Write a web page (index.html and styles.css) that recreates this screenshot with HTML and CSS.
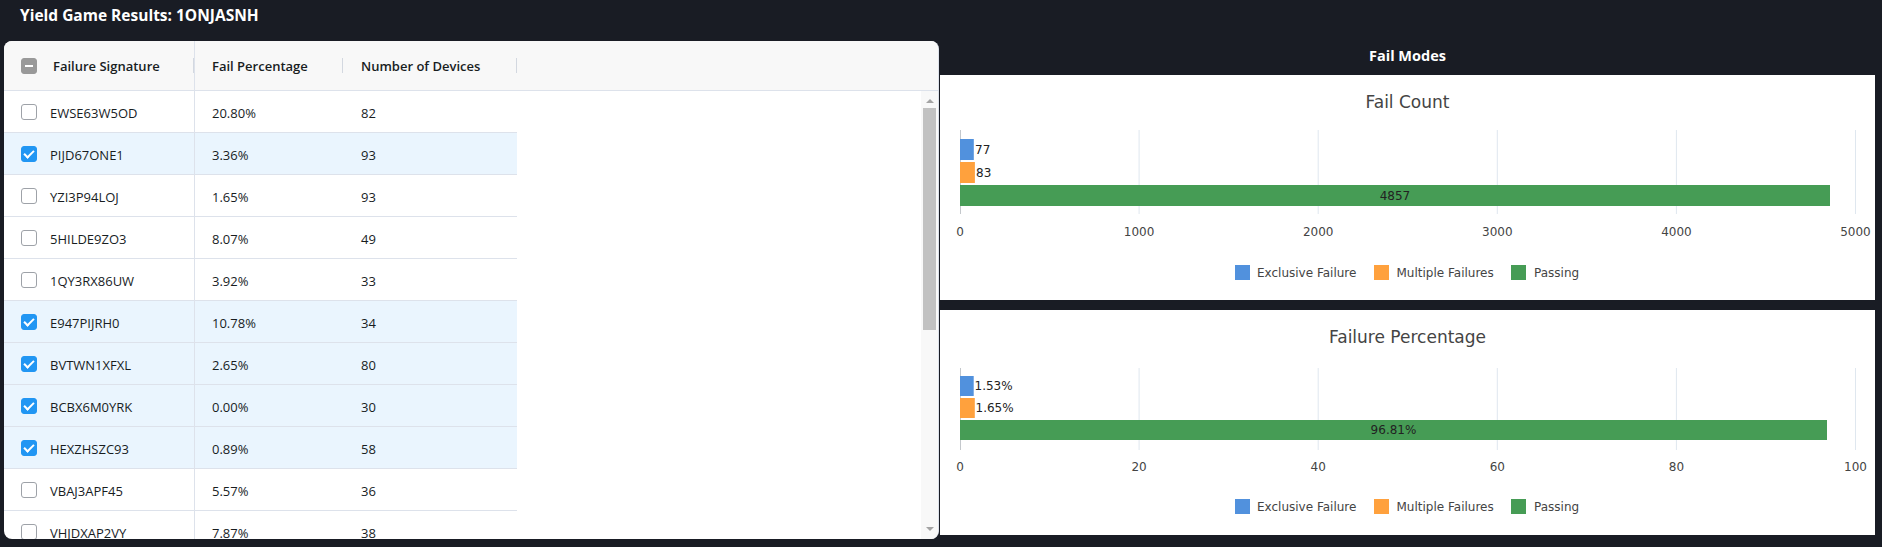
FILE: index.html
```html
<!DOCTYPE html>
<html lang="en">
<head>
<meta charset="utf-8">
<title>Yield Game Results</title>
<link rel="stylesheet" href="styles.css">
</head>
<body>
<div class="app">
  <header class="topbar"><h1 class="title">Yield Game Results: 1ONJASNH</h1></header>
  <main class="main">
    <section class="grid-card">
      <div class="grid-header">
        <div class="hcell c1"><span class="cb cb-indet"></span><span class="htext">Failure Signature</span></div>
        <div class="hcell c2"><span class="htext">Fail Percentage</span></div>
        <div class="hcell c3"><span class="htext">Number of Devices</span></div>
      </div>
      <div class="grid-body">
        <div class="rows">
          <div class="row"><div class="cell c1"><span class="cb"></span>EWSE63W5OD</div><div class="cell c2">20.80%</div><div class="cell c3">82</div></div>
          <div class="row sel"><div class="cell c1"><span class="cb cb-on"></span>PIJD67ONE1</div><div class="cell c2">3.36%</div><div class="cell c3">93</div></div>
          <div class="row"><div class="cell c1"><span class="cb"></span>YZI3P94LOJ</div><div class="cell c2">1.65%</div><div class="cell c3">93</div></div>
          <div class="row"><div class="cell c1"><span class="cb"></span>5HILDE9ZO3</div><div class="cell c2">8.07%</div><div class="cell c3">49</div></div>
          <div class="row"><div class="cell c1"><span class="cb"></span>1QY3RX86UW</div><div class="cell c2">3.92%</div><div class="cell c3">33</div></div>
          <div class="row sel"><div class="cell c1"><span class="cb cb-on"></span>E947PIJRH0</div><div class="cell c2">10.78%</div><div class="cell c3">34</div></div>
          <div class="row sel"><div class="cell c1"><span class="cb cb-on"></span>BVTWN1XFXL</div><div class="cell c2">2.65%</div><div class="cell c3">80</div></div>
          <div class="row sel"><div class="cell c1"><span class="cb cb-on"></span>BCBX6M0YRK</div><div class="cell c2">0.00%</div><div class="cell c3">30</div></div>
          <div class="row sel"><div class="cell c1"><span class="cb cb-on"></span>HEXZHSZC93</div><div class="cell c2">0.89%</div><div class="cell c3">58</div></div>
          <div class="row"><div class="cell c1"><span class="cb"></span>VBAJ3APF45</div><div class="cell c2">5.57%</div><div class="cell c3">36</div></div>
          <div class="row"><div class="cell c1"><span class="cb"></span>VHJDXAP2VY</div><div class="cell c2">7.87%</div><div class="cell c3">38</div></div>
        </div>
        <div class="vscroll">
          <span class="arrow arrow-up"></span>
          <div class="thumb-track"><span class="thumb"></span></div>
          <span class="arrow arrow-down"></span>
        </div>
      </div>
    </section>

    <section class="charts">
      <h2 class="charts-title">Fail Modes</h2>
      <div class="chart-card">
        <svg class="chart" width="935" height="225" viewBox="0 0 935 225">
          <text class="ctitle" x="467.5" y="27">Fail Count</text>
          <g class="grid">
            <line x1="199.1" y1="55" x2="199.1" y2="139"/>
            <line x1="378.2" y1="55" x2="378.2" y2="139"/>
            <line x1="557.3" y1="55" x2="557.3" y2="139"/>
            <line x1="736.4" y1="55" x2="736.4" y2="139"/>
            <line x1="915.5" y1="55" x2="915.5" y2="139"/>
          </g>
          <line class="zero" x1="20.5" y1="55" x2="20.5" y2="139"/>
          <rect class="b-blue" x="20" y="64" width="13.8" height="21"/>
          <rect class="b-orange" x="20" y="87" width="14.9" height="21"/>
          <rect class="b-green" x="20" y="110" width="870" height="21"/>
          <text class="blabel" x="35" y="74.5">77</text>
          <text class="blabel" x="36" y="97.5">83</text>
          <text class="blabel mid" x="455" y="120.5">4857</text>
          <g class="ticks">
            <text x="20" y="157">0</text>
            <text x="199.1" y="157">1000</text>
            <text x="378.2" y="157">2000</text>
            <text x="557.3" y="157">3000</text>
            <text x="736.4" y="157">4000</text>
            <text x="915.5" y="157">5000</text>
          </g>
          <g class="legend">
            <rect class="b-blue" x="295" y="190" width="15" height="15"/>
            <text x="317" y="197.5">Exclusive Failure</text>
            <rect class="b-orange" x="434" y="190" width="15" height="15"/>
            <text x="456.5" y="197.5">Multiple Failures</text>
            <rect class="b-green" x="571" y="190" width="15" height="15"/>
            <text x="594" y="197.5">Passing</text>
          </g>
        </svg>
      </div>
      <div class="chart-card">
        <svg class="chart" width="935" height="225" viewBox="0 0 935 225">
          <text class="ctitle" x="467.5" y="27">Failure Percentage</text>
          <g class="grid">
            <line x1="199.1" y1="58" x2="199.1" y2="140"/>
            <line x1="378.2" y1="58" x2="378.2" y2="140"/>
            <line x1="557.3" y1="58" x2="557.3" y2="140"/>
            <line x1="736.4" y1="58" x2="736.4" y2="140"/>
            <line x1="915.5" y1="58" x2="915.5" y2="140"/>
          </g>
          <line class="zero" x1="20.5" y1="58" x2="20.5" y2="140"/>
          <rect class="b-blue" x="20" y="66" width="13.7" height="20"/>
          <rect class="b-orange" x="20" y="88" width="14.8" height="20"/>
          <rect class="b-green" x="20" y="110" width="867" height="20"/>
          <text class="blabel" x="34.5" y="76">1.53%</text>
          <text class="blabel" x="35.5" y="98">1.65%</text>
          <text class="blabel mid" x="453.5" y="120">96.81%</text>
          <g class="ticks">
            <text x="20" y="157">0</text>
            <text x="199.1" y="157">20</text>
            <text x="378.2" y="157">40</text>
            <text x="557.3" y="157">60</text>
            <text x="736.4" y="157">80</text>
            <text x="915.5" y="157">100</text>
          </g>
          <g class="legend">
            <rect class="b-blue" x="295" y="189" width="15" height="15"/>
            <text x="317" y="196.5">Exclusive Failure</text>
            <rect class="b-orange" x="434" y="189" width="15" height="15"/>
            <text x="456.5" y="196.5">Multiple Failures</text>
            <rect class="b-green" x="571" y="189" width="15" height="15"/>
            <text x="594" y="196.5">Passing</text>
          </g>
        </svg>
      </div>
    </section>
  </main>
</div>
</body>
</html>
```

FILE: styles.css
```css
* { box-sizing: border-box; }

html, body {
  margin: 0;
  padding: 0;
  background: #191c24;
  font-family: "Open Sans", "Noto Sans", "Liberation Sans", sans-serif;
  color: #181d1f;
  width: 1882px;
  height: 547px;
  overflow: hidden;
}

.app {
  display: flex;
  flex-direction: column;
}

.topbar {
  height: 41px;
  padding-left: 20px;
}

.title {
  margin: 0;
  font-size: 15.5px;
  font-weight: 700;
  line-height: 30px;
  color: #ffffff;
}

.main {
  display: flex;
  padding-left: 4px;
  gap: 1px;
}

/* ---------- Grid ---------- */
.grid-card {
  width: 935px;
  height: 498px;
  background: #ffffff;
  border-radius: 8px;
  overflow: hidden;
  display: flex;
  flex-direction: column;
  border-right: 1px solid #dde2eb;
}

.grid-header {
  height: 50px;
  flex: none;
  display: flex;
  background: #f8f8f8;
  border-bottom: 1px solid #dde2eb;
  font-size: 13px;
  font-weight: 600;
}

.hcell {
  position: relative;
  display: flex;
  align-items: center;
  height: 100%;
}

.hcell::after {
  content: "";
  position: absolute;
  right: 0;
  top: 17px;
  width: 1px;
  height: 15px;
  background: #d3d8e0;
}

.c1 { width: 191px; padding-left: 17px; border-right: 1px solid #dde2eb; }
.c2 { width: 148px; padding-left: 17px; }
.c3 { width: 174px; padding-left: 18px; }

.hcell.c1 .cb { margin-right: 16px; }

.grid-body {
  flex: 1;
  display: flex;
  min-height: 0;
}

.rows {
  flex: 1;
  overflow: hidden;
}

.row {
  width: 513px;
  height: 42px;
  display: flex;
  border-bottom: 1px solid #dde2eb;
  font-size: 13px;
}

.row.sel { background: #eaf5fe; }

.cell {
  display: flex;
  align-items: center;
  height: 100%;
  padding-top: 2px;
}

.cell.c1 .cb { margin-right: 13px; margin-top: -2px; }

/* Checkboxes */
.cb {
  flex: none;
  width: 16px;
  height: 16px;
  border: 1px solid #9ea2a8;
  border-radius: 3px;
  background: #ffffff;
  display: inline-flex;
  align-items: center;
  justify-content: center;
}

.cb-on {
  background: #2196f3;
  border-color: #2196f3;
}

.cb-on::before {
  content: "";
  width: 8px;
  height: 4px;
  border-left: 2px solid #ffffff;
  border-bottom: 2px solid #ffffff;
  transform: translateY(-1px) rotate(-45deg);
}

.cb-indet {
  background: #999999;
  border-color: #999999;
}

.cb-indet::before {
  content: "";
  width: 8px;
  height: 2px;
  background: #ffffff;
}

/* Scrollbar */
.vscroll {
  width: 17px;
  flex: none;
  background: #f8f8f8;
  display: flex;
  flex-direction: column;
  align-items: center;
}

.arrow {
  flex: none;
  width: 0;
  height: 0;
  border-left: 4px solid transparent;
  border-right: 4px solid transparent;
}

.arrow-up {
  margin-top: 8px;
  border-bottom: 4px solid #a3a3a3;
}

.arrow-down {
  margin-bottom: 8px;
  border-top: 4px solid #a3a3a3;
}

.thumb-track {
  flex: 1;
  width: 100%;
  padding: 5px 2px 0;
}

.thumb {
  display: block;
  width: 13px;
  height: 222px;
  background: #c1c1c1;
}

/* ---------- Charts ---------- */
.charts {
  width: 935px;
  display: flex;
  flex-direction: column;
}

.charts-title {
  margin: 0;
  height: 34px;
  line-height: 30px;
  text-align: center;
  font-size: 14.5px;
  font-weight: 700;
  color: #ffffff;
}

.chart-card {
  height: 225px;
  background: #ffffff;
  margin-bottom: 10px;
}

.chart {
  display: block;
  font-family: "DejaVu Sans", Verdana, sans-serif;
}

.ctitle {
  font-size: 17px;
  fill: #444444;
  text-anchor: middle;
  dominant-baseline: central;
}

.grid line {
  stroke: #dfe7ef;
  stroke-width: 1;
}

.zero {
  stroke: #c4c8cc;
  stroke-width: 1;
}

.b-blue { fill: #5191dd; }
.b-orange { fill: #ffa13d; }
.b-green { fill: #469c55; }

.blabel {
  font-size: 12px;
  fill: #222222;
  dominant-baseline: central;
}

.blabel.mid { text-anchor: middle; }

.ticks text {
  font-size: 12px;
  fill: #444444;
  text-anchor: middle;
  dominant-baseline: central;
}

.legend text {
  font-size: 12px;
  fill: #444444;
  dominant-baseline: central;
}
```
